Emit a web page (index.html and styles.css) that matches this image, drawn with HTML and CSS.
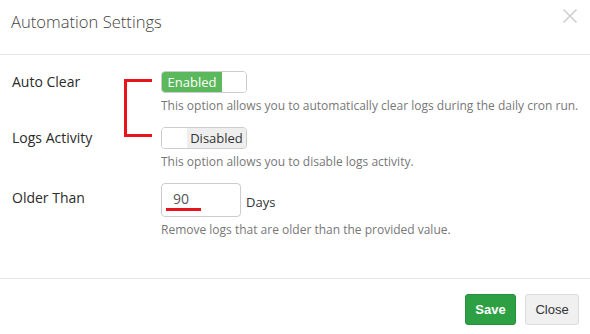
FILE: index.html
```html
<!DOCTYPE html>
<html>
<head>
<meta charset="utf-8">
<link rel="stylesheet" href="styles.css">
</head>
<body>
<div class="modal">
  <div class="modal-header">
    <h4 class="modal-title">Automation Settings</h4>
    <svg class="close" width="16" height="16" viewBox="0 0 16 16"><path d="M1.5 1.5 L14.5 14.5 M14.5 1.5 L1.5 14.5" stroke="#cfcfcf" stroke-width="1.6" fill="none"/></svg>
  </div>
  <div class="modal-body">
    <div class="bracket"></div>
    <div class="row">
      <label class="label">Auto Clear</label>
      <div class="control">
        <div class="switch on"><span class="switch-on">Enabled</span><span class="switch-handle"></span></div>
        <p class="help">This option allows you to automatically clear logs during the daily cron run.</p>
      </div>
    </div>
    <div class="row">
      <label class="label">Logs Activity</label>
      <div class="control">
        <div class="switch off"><span class="switch-handle"></span><span class="switch-off">Disabled</span></div>
        <p class="help">This option allows you to disable logs activity.</p>
      </div>
    </div>
    <div class="row">
      <label class="label label-input">Older Than</label>
      <div class="control">
        <div class="input-line">
          <div class="input"><span class="input-val">90</span><span class="underline"></span></div>
          <span class="unit">Days</span>
        </div>
        <p class="help">Remove logs that are older than the provided value.</p>
      </div>
    </div>
  </div>
  <div class="modal-footer">
    <button class="btn btn-save">Save</button>
    <button class="btn btn-close">Close</button>
  </div>
</div>
</body>
</html>
```

FILE: styles.css
```css
* { box-sizing: border-box; }
html, body { margin: 0; padding: 0; background: #fff; }
body { font-family: "Open Sans", "Liberation Sans", sans-serif; color: #333; width: 590px; height: 334px; overflow: hidden; }

.modal { width: 590px; }

.modal-header {
  height: 55px;
  border-bottom: 1px solid #e5e5e5;
  padding: 0 12px 0 11px;
  display: flex;
  align-items: flex-start;
  justify-content: space-between;
}
.modal-title {
  margin: 0;
  padding-top: 9px;
  font-size: 16.6px;
  font-weight: 300;
  line-height: 26px;
  color: #444;
}
.close {
  display: block;
  margin-top: 8px;
}

.modal-body {
  position: relative;
  padding: 16px 12px 0;
  height: 223px;
}
.bracket {
  position: absolute;
  left: 124px;
  top: 24px;
  width: 28px;
  height: 58px;
  border: 3px solid #e8141c;
  border-right: none;
}

.row {
  display: grid;
  grid-template-columns: 149px 1fr;
  margin-bottom: 13px;
}
.label {
  font-size: 14px;
  font-weight: 500;
  color: #2b2b2b;
  line-height: 22px;
}
.label-input { line-height: 30px; }

.help {
  margin: 5px 0 0;
  font-size: 12px;
  line-height: 16px;
  color: #777;
  white-space: nowrap;
}

.switch {
  width: 86px;
  height: 22px;
  border: 1px solid #ccc;
  border-radius: 4px;
  display: flex;
  overflow: hidden;
  font-size: 13px;
  line-height: 20px;
}
.switch-on {
  width: 60px;
  background: #5cb85c;
  color: #fff;
  font-weight: 500;
  text-align: center;
}
.switch-off {
  width: 59px;
  background: #eee;
  color: #333;
  text-align: center;
}
.switch-handle { flex: 1; background: #fff; }

.input-line { display: flex; align-items: center; gap: 5px; }
.input {
  position: relative;
  width: 80px;
  height: 34px;
  border: 1px solid #ccc;
  border-radius: 4px;
  padding: 0 11px;
  font-size: 14px;
  line-height: 30px;
  color: #555;
}
.underline {
  position: absolute;
  left: 4px;
  top: 24px;
  width: 35px;
  height: 3px;
  background: #e8141c;
}
.unit { font-size: 13px; color: #333; padding-top: 4px; }

.modal-footer {
  border-top: 1px solid #e5e5e5;
  padding: 15px 11px 0 0;
  display: flex;
  justify-content: flex-end;
  gap: 9px;
}
.btn {
  font-family: "Liberation Sans", Arial, sans-serif;
  font-size: 13px;
  height: 31px;
  border-radius: 3px;
  cursor: pointer;
}
.btn-save {
  background: #2da043;
  border: 1px solid #28903c;
  color: #fff;
  font-weight: bold;
  width: 51px;
  padding: 0;
}
.btn-close {
  background: #f0f0f0;
  border: 1px solid #dcdcdc;
  color: #333;
  width: 54px;
  padding: 0;
}
```
